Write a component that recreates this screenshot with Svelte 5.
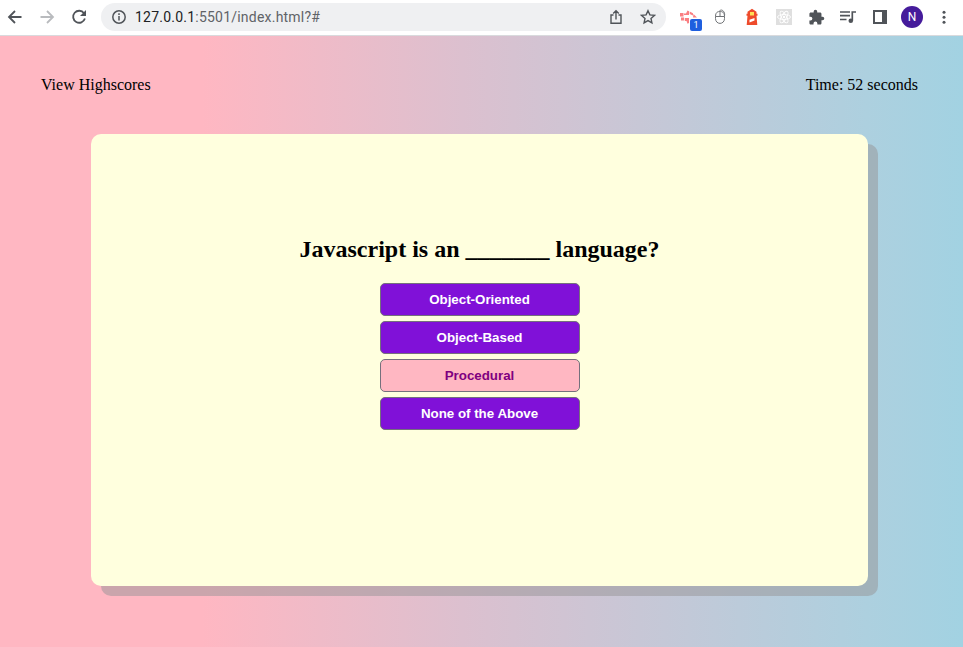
<script>
  const answers = ['Object-Oriented', 'Object-Based', 'Procedural', 'None of the Above'];
  let hovered = $state(2);
</script>

<div class="window">
  <header class="toolbar">
    <svg class="nav" width="20" height="20" viewBox="0 0 20 20"><path d="M16.500 10H4M10 4L4 10l6 6" /></svg>
    <svg class="nav off" width="20" height="20" viewBox="0 0 20 20"><path d="M3.500 10h12.500M10 4l6 6-6 6" /></svg>
    <svg class="nav" width="20" height="20" viewBox="0 0 20 20"><path d="M15 6.200A6 6 0 1 0 15.900 11.500" /><path class="solid" d="M17 3v6h-6z" /></svg>
    <div class="address">
      <svg class="info" width="16" height="16" viewBox="0 0 16 16"><circle cx="8" cy="8" r="6.200" /><path d="M8 7v4.500M8 4.300v1.700" /></svg>
      <span class="url"><b>127.0.0.1</b>:5501/index.html?#</span>
      <svg class="line share" width="16" height="16" viewBox="0 0 16 16"><path d="M5.500 6H3v8.300h10V6h-2.500M8 10.500V2M5.200 4.600L8 1.800l2.800 2.800" /></svg>
      <svg class="line" width="16" height="16" viewBox="0 0 16 16"><path d="M8 1.700l1.900 4.200 4.500.5-3.400 3 .9 4.500L8 11.600l-3.900 2.300.9-4.500-3.400-3 4.500-.5z" /></svg>
    </div>
    <div class="extensions">
      <div class="capture">
        <svg width="18" height="16" viewBox="0 0 18 16"><path fill="#fa7f82" d="M0 4h3.500v3.500H0zM7.500 1.500l1.500.8V6H4V4.500h2zM1 8.500h3v3H1zM4.800 9H9v5l-1.500.8-1-2.800H4.800zM9.700 2.500l3.300 1.800v2.200l-3.300-1.500zM13.500 5l3.500 3.500h-4z" /></svg>
        <span>1</span>
      </div>
      <svg width="16" height="18" viewBox="0 0 16 18" fill="none" stroke="#707376" stroke-width="1"><path d="M3.500 8.500h9v2c0 6.500-9 6.500-9 0zM3.500 8.500c0-4.500 2.500-5 4.500-5s4.500.5 4.500 5M8 4v4.500M7.500 3.500c.5-2.500 3.500-1.500 4.500.5s.5 3 .5 4" /></svg>
      <svg width="16" height="18" viewBox="0 0 16 18"><path fill="#ee4b2b" d="M3.500 3.800L8 .8l4.500 3v2h1v2h-1l.8 9.200H2.700l.8-9.200h-1v-2h1z" /><path fill="#ffdf55" d="M6 4h4v3.500H6z" /><path fill="#fff" d="M5.500 11.800l5-1.800v2.600l-5 2z" /></svg>
      <svg width="16" height="16" viewBox="0 0 16 16"><path fill="#dfdfdf" d="M0 0h16v16H0z" /><g fill="none" stroke="#fff" stroke-width=".9"><ellipse cx="8" cy="8" rx="6.500" ry="2.500" /><ellipse cx="8" cy="8" rx="6.500" ry="2.500" transform="rotate(60 8 8)" /><ellipse cx="8" cy="8" rx="6.500" ry="2.500" transform="rotate(120 8 8)" /></g><circle cx="8" cy="8" r="1.200" fill="#fff" /></svg>
      <svg width="17" height="17" viewBox="0 0 24 24"><path fill="#505459" d="M20.500 11H19V7c0-1.100-.9-2-2-2h-4V3.500a2.500 2.500 0 0 0-5 0V5H4c-1.100 0-2 .9-2 2v3.800h1.500a2.700 2.700 0 0 1 0 5.400H2V20c0 1.100.9 2 2 2h3.800v-1.500a2.700 2.700 0 0 1 5.400 0V22H17c1.100 0 2-.9 2-2v-4h1.500a2.500 2.500 0 0 0 0-5z" /></svg>
      <svg width="18" height="16" viewBox="0 0 18 16"><path fill="none" stroke="#505459" stroke-width="1.700" d="M1 3h10M1 6.700h10M1 10.500h6.500M13.300 11.500V3H17" /><circle cx="11.800" cy="11.700" r="2.300" fill="#505459" /></svg>
      <svg width="16" height="16" viewBox="0 0 16 16"><path fill="#505459" fill-rule="evenodd" d="M1 1h14v14H1zM3 3v10h7V3z" /></svg>
      <span class="avatar">N</span>
      <svg width="16" height="16" viewBox="0 0 16 16" fill="#505459"><circle cx="8" cy="3.300" r="1.500" /><circle cx="8" cy="8.300" r="1.500" /><circle cx="8" cy="13.300" r="1.500" /></svg>
    </div>
  </header>

  <main>
    <nav><span>View Highscores</span><span>Time: 52 seconds</span></nav>
    <section>
      <h2>Javascript is an _______ language?</h2>
      <div class="answers">
        {#each answers as answer, i}
          <button class:active={hovered === i} onmouseenter={() => (hovered = i)}>{answer}</button>
        {/each}
      </div>
    </section>
  </main>
</div>

<style>
  .window { width: 963px; height: 647px; display: flex; flex-direction: column; overflow: hidden; }
  .toolbar { box-sizing: border-box; height: 36px; flex: none; display: flex; align-items: flex-start; padding: 3px 3px 0 5px; background: #fff; border-bottom: 1px solid #d9dadd; }
  svg { display: block; flex: none; }
  .nav { margin: 4px 12px 0 0; fill: none; stroke: #505459; stroke-width: 1.8; }
  .nav.off { stroke: #b9bbbe; }
  .nav .solid { fill: #505459; stroke: none; }
  .address { box-sizing: border-box; width: 565px; height: 28px; border-radius: 14px; background: #eff0f2; display: flex; align-items: center; padding: 0 10px; }
  .info { fill: none; stroke: #505459; stroke-width: 1.5; }
  .url { flex: 1; margin-left: 8px; font: 14px/20px Roboto, sans-serif; letter-spacing: .22px; color: #606367; }
  .url b { font-weight: 400; color: #202124; }
  .line { fill: none; stroke: #505459; stroke-width: 1.4; }
  .share { margin-right: 16px; }
  .extensions { height: 28px; display: grid; grid-template-columns: repeat(9, 32px); align-items: center; justify-items: center; margin-left: 6px; }
  .capture { display: flow-root; position: relative; justify-self: start; width: 22px; height: 22px; margin-left: 10px; }
  .capture svg { margin-top: 3px; }
  .capture { margin-left: 8px; }
  .capture span { position: absolute; left: 10px; top: 13px; width: 12px; height: 12px; border-radius: 2px; background: #1f5fdf; color: #fff; font: 9px/12px Roboto, sans-serif; text-align: center; }
  .avatar { width: 22px; height: 22px; border-radius: 50%; background: #451b9b; color: #fff; font: 12px/22px Roboto, sans-serif; text-align: center; }
  main { flex: 1; background: linear-gradient(to right, #ffb7c2 21%, #dcc0cf 48%, #add0df 90%, #a2d2e2); font-family: "Liberation Serif", serif; color: #000; }
  nav { display: flex; justify-content: space-between; padding: 40px 45px 0 41px; font-size: 16px; line-height: 18px; }
  section { box-sizing: border-box; width: 777px; height: 452px; margin: 40px 0 0 91px; padding-top: 101px; border-radius: 10px; background: #ffffde; box-shadow: 10px 10px rgba(150, 147, 150, .5); }
  h2 { margin: 0; font-size: 24px; line-height: 28px; text-align: center; }
  .answers { display: flex; flex-direction: column; align-items: center; gap: 5px; margin-top: 20px; }
  button { box-sizing: border-box; width: 200px; height: 33px; padding: 0; border: 1px solid #75707c; border-radius: 5px; background: #8011d8; color: #fff; font: bold 13.333px/15px "Liberation Sans", Arial, sans-serif; }
  button.active { background: #ffb7c2; color: #800080; }
</style>
